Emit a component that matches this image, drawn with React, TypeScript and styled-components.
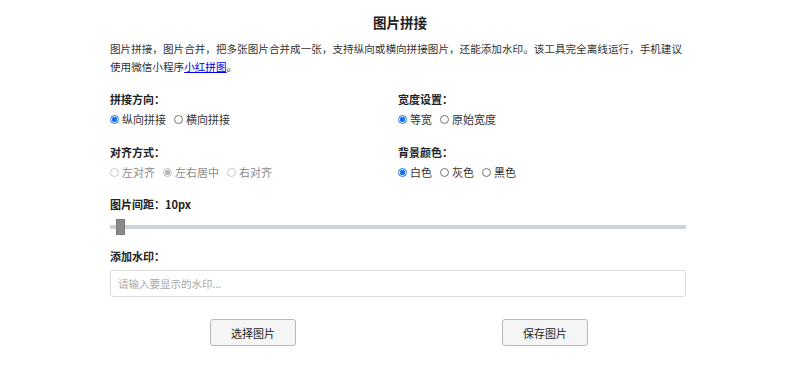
import styled, { createGlobalStyle } from "styled-components";

const GlobalStyle = createGlobalStyle`
  body {
    margin: 0;
    background: #fff;
    font-family: "Noto Sans CJK SC", "Noto Sans", sans-serif;
    color: #222;
  }
`;

type Option = { label: string; checked?: boolean; disabled?: boolean };

const groups: { title: string; name: string; options: Option[] }[] = [
  {
    title: "拼接方向：",
    name: "direction",
    options: [{ label: "纵向拼接", checked: true }, { label: "横向拼接" }],
  },
  {
    title: "宽度设置：",
    name: "width",
    options: [{ label: "等宽", checked: true }, { label: "原始宽度" }],
  },
  {
    title: "对齐方式：",
    name: "align",
    options: [
      { label: "左对齐", disabled: true },
      { label: "左右居中", checked: true, disabled: true },
      { label: "右对齐", disabled: true },
    ],
  },
  {
    title: "背景颜色：",
    name: "bg",
    options: [
      { label: "白色", checked: true },
      { label: "灰色" },
      { label: "黑色" },
    ],
  },
];

function App() {
  return (
    <>
      <GlobalStyle />
      <Page>
        <Title>图片拼接</Title>
        <Description>
          图片拼接，图片合并，把多张图片合并成一张，支持纵向或横向拼接图片，还能添加水印。该工具完全离线运行，手机建议使用微信小程序
          <a href="#">小红拼图</a>。
        </Description>
        <Options>
          {groups.map((g) => (
            <Field key={g.name}>
              <Label>{g.title}</Label>
              <RadioRow>
                {g.options.map((o) => (
                  <RadioItem key={o.label} $disabled={o.disabled}>
                    <Radio
                      type="radio"
                      name={g.name}
                      defaultChecked={o.checked}
                      disabled={o.disabled}
                    />
                    {o.label}
                  </RadioItem>
                ))}
              </RadioRow>
            </Field>
          ))}
        </Options>
        <SliderField>
          <Label>图片间距：10px</Label>
          <Slider type="range" min={0} max={1000} defaultValue={10} />
        </SliderField>
        <InputField>
          <Label>添加水印：</Label>
          <TextInput placeholder="请输入要显示的水印..." />
        </InputField>
        <Actions>
          <ActionButton>选择图片</ActionButton>
          <ActionButton>保存图片</ActionButton>
        </Actions>
      </Page>
    </>
  );
}

export default App;

const Page = styled.main`
  width: 576px;
  margin: 0 auto;
  padding: 12px 4px 0 0;
  display: flex;
  flex-direction: column;
`;

const Title = styled.h1`
  margin: 0;
  padding-left: 4px;
  text-align: center;
  font-size: 13.5px;
  line-height: 20px;
  font-weight: 700;
  color: #222;
`;

const Description = styled.p`
  margin: 8px 0 0;
  font-size: 10.6px;
  line-height: 18px;
  color: #333;
  a {
    color: #0000ee;
    text-decoration: underline;
  }
`;

const Options = styled.div`
  margin-top: 15px;
  display: grid;
  grid-template-columns: 1fr 1fr;
  row-gap: 17px;
`;

const Field = styled.div`
  display: flex;
  flex-direction: column;
  gap: 4px;
`;

const Label = styled.div`
  font-size: 11px;
  line-height: 16px;
  font-weight: 700;
  color: #222;
`;

const RadioRow = styled.div`
  display: flex;
  align-items: center;
  gap: 8px;
  height: 16px;
`;

const RadioItem = styled.label<{ $disabled?: boolean }>`
  display: flex;
  align-items: center;
  gap: 3px;
  font-size: 11px;
  line-height: 16px;
  color: ${(p) => (p.$disabled ? "#8a8a8a" : "#333")};
`;

const Radio = styled.input`
  appearance: none;
  margin: 0;
  width: 9px;
  height: 9px;
  border-radius: 50%;
  border: 1px solid #767676;
  background: #fff;
  box-sizing: border-box;
  &:checked {
    border-color: #1a73e8;
    background: radial-gradient(circle, #1a73e8 0 2.6px, #fff 3px);
  }
  &:disabled {
    border-color: #c8c8c8;
  }
  &:disabled:checked {
    border-color: #c0c0c0;
    background: radial-gradient(circle, #b8b8b8 0 2.6px, #fff 3px);
  }
`;

const SliderField = styled.div`
  margin-top: 16px;
  display: flex;
  flex-direction: column;
  gap: 7px;
`;

const Slider = styled.input`
  appearance: none;
  width: 100%;
  height: 16px;
  margin: 0;
  background: transparent;
  &::-webkit-slider-runnable-track {
    height: 4px;
    background: #cdd3dc;
  }
  &::-webkit-slider-thumb {
    appearance: none;
    width: 9px;
    height: 16px;
    margin-top: -6px;
    background: #8a8a8a;
    border: 1px solid #7a7a7a;
    box-sizing: border-box;
  }
`;

const InputField = styled.div`
  margin-top: 13px;
  display: flex;
  flex-direction: column;
  gap: 6px;
`;

const TextInput = styled.input`
  box-sizing: border-box;
  width: 100%;
  height: 27px;
  border: 1px solid #dcdcdc;
  border-radius: 3px;
  padding: 0 7px;
  font-family: "Noto Sans CJK SC", "Noto Sans", sans-serif;
  font-size: 10.5px;
  outline: none;
  &::placeholder {
    color: #a8a8a8;
  }
`;

const Actions = styled.div`
  margin-top: 22px;
  display: flex;
  justify-content: space-between;
  padding: 0 98px 0 100px;
`;

const ActionButton = styled.button`
  width: 86px;
  height: 27px;
  background: #f5f5f5;
  border: 1px solid #b8b8b8;
  border-radius: 3px;
  font-family: "Noto Sans CJK SC", "Noto Sans", sans-serif;
  font-size: 11px;
  color: #222;
  cursor: pointer;
`;
